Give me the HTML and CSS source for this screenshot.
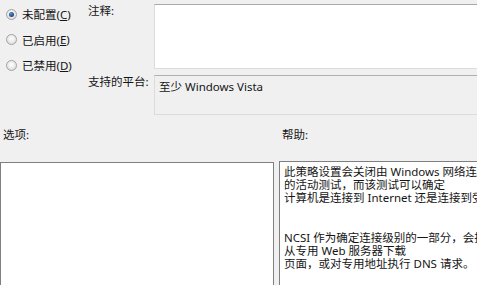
FILE: index.html
```html
<!DOCTYPE html>
<html>
  <head>
    <title>网络连接状态指示器</title>
    <link rel="stylesheet" href="styles.css">
  </head>
  <body>
    <div class="dialog">
      <div class="top">
        <div class="states">
          <label class="radio-row">
            <span class="radio checked"></span>
            未配置(<u>C</u>)
          </label>
          <label class="radio-row">
            <span class="radio"></span>
            已启用(<u>E</u>)
          </label>
          <label class="radio-row">
            <span class="radio"></span>
            已禁用(<u>D</u>)
          </label>
        </div>

        <div class="fields">
          <div class="field-label">注释:</div>
          <div class="comment-box"></div>
          <div class="field-label">支持的平台:</div>
          <div class="platform-box">至少 Windows Vista</div>
        </div>
      </div>

      <div class="panes">
        <div class="pane-label">选项:</div>
        <div class="pane-label">帮助:</div>
        <div class="options-box"></div>
        <div class="help-box">
          <p>
            此策略设置会关闭由 Windows 网络连接状态指示器 (NCSI) 执行<br>
            的活动测试，而该测试可以确定<br>
            计算机是连接到 Internet 还是连接到受限制的网络。
          </p>
          <p>
            NCSI 作为确定连接级别的一部分，会执行以下两种请求之一：<br>
            从专用 Web 服务器下载<br>
            页面，或对专用地址执行 DNS 请求。
          </p>
        </div>
      </div>
    </div>
  </body>
</html>
```

FILE: styles.css
```css
html,
body {
  margin: 0;
  overflow: hidden;
}
body {
  background-color: #f0f0f0;
  font-family: "Noto Sans", "Noto Sans CJK SC", sans-serif;
  font-size: 11.5px;
  color: #151515;
}
.dialog {
  width: 620px;
}
.top {
  display: flex;
}
.states {
  width: 88px;
  padding-top: 7px;
  display: flex;
  flex-direction: column;
  gap: 11.5px;
}
.radio-row {
  display: flex;
  align-items: center;
  height: 14px;
  padding-left: 6px;
  white-space: nowrap;
}
.radio {
  width: 9px;
  height: 9px;
  margin-right: 5px;
  border: 1px solid #a2a2a2;
  border-radius: 50%;
  background: radial-gradient(circle at 50% 40%, #ffffff 0%, #e6e6e6 60%, #d2d2d2 100%);
  position: relative;
}
.radio.checked:after {
  content: "";
  position: absolute;
  top: 2px;
  left: 2px;
  width: 5px;
  height: 5px;
  border-radius: 50%;
  background: radial-gradient(circle at 40% 35%, #5d8fcc 0%, #27548f 55%, #142c4d 100%);
}
.fields {
  flex: 1;
  display: grid;
  grid-template-columns: 66px 1fr;
  row-gap: 6px;
  padding-top: 4px;
}
.field-label {
  line-height: 13px;
  white-space: nowrap;
}
.comment-box {
  height: 63px;
  background-color: #fff;
  border: 1px solid #dcdcdc;
  border-top-color: #a9a9a9;
}
.platform-box {
  box-sizing: border-box;
  height: 40px;
  padding: 4px 4px 0;
  line-height: 13px;
  border: 1px solid #dcdcdc;
  border-top-color: #b0b0b0;
  white-space: nowrap;
}
.panes {
  margin-top: 13px;
  display: grid;
  grid-template-columns: 274px 1fr;
  grid-template-rows: 13px 124px;
  column-gap: 5px;
  row-gap: 20px;
}
.pane-label {
  line-height: 13px;
  padding-left: 3px;
}
.options-box {
  margin-top: 1px;
  background-color: #fff;
  border: 1px solid #7f7f7f;
  border-bottom: none;
}
.help-box {
  background-color: #fff;
  border: 1px solid #7f7f7f;
  border-bottom: none;
  padding: 3px 4px 0;
  white-space: nowrap;
  overflow: hidden;
}
.help-box p {
  margin: 0;
  line-height: 13px;
}
.help-box p + p {
  margin-top: 27px;
}
```
